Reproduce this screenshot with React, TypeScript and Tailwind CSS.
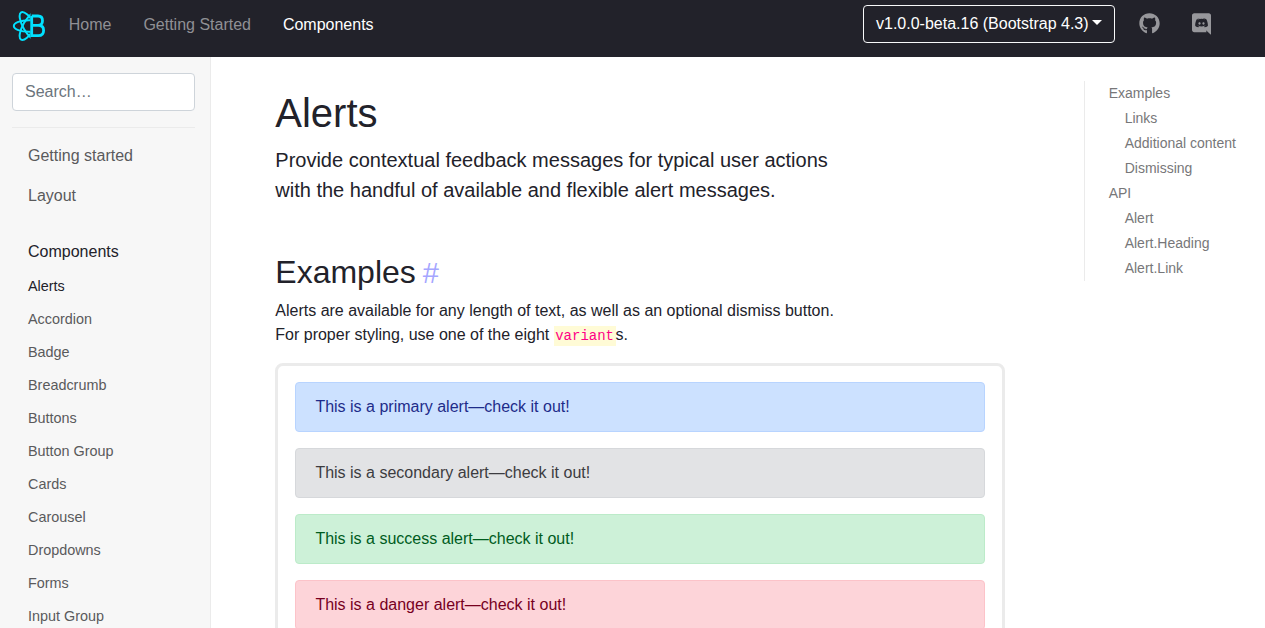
import React from "react";
import { FaGithub } from "react-icons/fa";

const components = ["Alerts", "Accordion", "Badge", "Breadcrumb", "Buttons", "Button Group", "Cards", "Carousel", "Dropdowns", "Forms", "Input Group"];

const alerts = [
  { name: "primary", style: "border-[#b8d4ff] bg-[#cce1ff] text-[#1e2c8a]" },
  { name: "secondary", style: "border-[#d6d8db] bg-[#e2e3e5] text-[#3c3c40]" },
  { name: "success", style: "border-[#bcebc9] bg-[#cdf1d8] text-[#005c1e]" },
  { name: "danger", style: "border-[#fcc3c9] bg-[#fdd4d9] text-[#77001f]" },
];

const toc = [
  { label: "Examples", nested: false },
  { label: "Links", nested: true },
  { label: "Additional content", nested: true },
  { label: "Dismissing", nested: true },
  { label: "API", nested: false },
  { label: "Alert", nested: true },
  { label: "Alert.Heading", nested: true },
  { label: "Alert.Link", nested: true },
];

function Logo() {
  return (
    <svg className="h-[32px] w-[34px] shrink-0" viewBox="0 0 34 32" fill="none" stroke="#00e1ff">
      <clipPath id="orbits">
        <path d="M0 0h18.500v32H0z" />
      </clipPath>
      <g clipPath="url(#orbits)" strokeWidth="2">
        <ellipse cx="17" cy="16" rx="15.200" ry="5.800" />
        <ellipse cx="17" cy="16" rx="15.800" ry="5.800" transform="rotate(60 17 16)" />
        <ellipse cx="17" cy="16" rx="15.800" ry="5.800" transform="rotate(-60 17 16)" />
      </g>
      <path strokeWidth="2.8" d="M19.700 6v19.600h6.700c3.400 0 5.200-2 5.200-5.200s-1.800-5-5.200-5h-6.700M26 15.400c3 0 4.500-1.700 4.500-4.700S29 6 26 6h-6.300" />
    </svg>
  );
}

function DiscordIcon() {
  return (
    <svg className="h-[22px] w-[19px]" viewBox="0 0 448 512" fill="currentColor">
      <path d="M297.216 243.2c0 15.616-11.52 28.416-26.112 28.416-14.336 0-26.112-12.8-26.112-28.416s11.52-28.416 26.112-28.416c14.592 0 26.112 12.8 26.112 28.416zm-119.552-28.416c-14.592 0-26.112 12.8-26.112 28.416s11.776 28.416 26.112 28.416c14.592 0 26.112-12.8 26.112-28.416.256-15.616-11.52-28.416-26.112-28.416zM448 52.736V512c-64.494-56.994-43.868-38.128-118.784-107.776l13.568 47.36H52.48C23.552 451.584 0 428.032 0 398.848V52.736C0 23.552 23.552 0 52.48 0h343.04C424.448 0 448 23.552 448 52.736zm-72.96 242.688c0-82.432-36.864-149.248-36.864-149.248-36.864-27.648-71.936-26.88-71.936-26.88l-3.584 4.096c43.52 13.312 63.744 32.512 63.744 32.512-60.811-33.329-132.244-33.335-191.232-7.424-9.472 4.352-15.104 7.424-15.104 7.424s21.248-20.224 67.328-33.536l-2.56-3.072s-35.072-.768-71.936 26.88c0 0-36.864 66.816-36.864 149.248 0 0 21.504 37.12 78.08 38.912 0 0 9.472-11.52 17.152-21.248-32.512-9.728-44.8-30.208-44.8-30.208 3.766 2.636 9.976 6.053 10.496 6.4 43.21 24.198 104.588 32.126 159.744 8.96 8.96-3.328 18.944-8.192 29.44-15.104 0 0-12.8 20.992-46.336 30.464 7.68 9.728 16.896 20.736 16.896 20.736 56.576-1.792 78.336-38.912 78.336-38.912z" />
    </svg>
  );
}

function Header() {
  return (
    <header className="flex h-[57px] shrink-0 items-start bg-[#22222a] text-white">
      <div className="pt-[10px] pl-3">
        <Logo />
      </div>
      <nav className="flex gap-[31.9px] pt-[13px] pl-[22.8px] text-[#909095]">
        <a>Home</a>
        <a>Getting Started</a>
        <a className="text-white">Components</a>
      </nav>
      <button className="mt-[5px] ml-auto flex h-[38px] w-[252px] items-center rounded border border-[#f8f9fa] px-3 pb-px whitespace-nowrap">
        v1.0.0-beta.16 (Bootstrap 4.3)
        <svg className="mb-0.5 ml-[3px] h-[5px] w-[10px] shrink-0" viewBox="0 0 10 5" fill="currentColor">
          <path d="M0 0h10L5 5z" />
        </svg>
      </button>
      <a className="mt-[13px] ml-6 text-[#97979b]">
        <FaGithub className="size-[21px]" />
      </a>
      <a className="mt-[13px] mr-[54px] ml-8 text-[#97979b]">
        <DiscordIcon />
      </a>
    </header>
  );
}

function Sidebar() {
  return (
    <aside className="w-[211px] shrink-0 border-r border-[#ebebeb] bg-[#f7f7f7] pt-4 text-[#5a5a5c]">
      <div className="mx-3 mr-[15px] border-b border-[#ebebeb] pb-4">
        <input
          placeholder="Search…"
          className="block h-[38px] w-[183px] rounded border border-[#ced4da] bg-white px-3 placeholder:text-[#6c757d]"
        />
      </div>
      <nav className="pl-7">
        <a className="mt-4 block h-6">Getting started</a>
        <a className="mt-4 block h-6">Layout</a>
        <a className="mt-8 mb-2 block h-6 text-[#22222a]">Components</a>
        {components.map((item, i) => (
          <a key={item} className={`block h-[33px] pt-[3px] text-[14.4px] leading-[22px] ${i === 0 ? "text-[#22222a]" : ""}`}>
            {item}
          </a>
        ))}
      </nav>
    </aside>
  );
}

export default function App() {
  return (
    <div className="flex h-[628px] flex-col overflow-hidden bg-white font-['Liberation_Sans',Arial,sans-serif] text-base text-[#22222a]">
      <Header />
      <div className="flex min-h-0 flex-1">
        <Sidebar />
        <main className="ml-[64.3px] w-[730px] shrink-0 pt-8">
          <h1 className="text-[40px] leading-12">Alerts</h1>
          <p className="mt-2 text-xl leading-[30px]">
            Provide contextual feedback messages for typical user actions
            <br />
            with the handful of available and flexible alert messages.
          </p>
          <h2 className="mt-12 text-[32px] leading-[38px]">
            Examples<span className="pl-[7px] text-[29px] leading-none text-[#a5a6ff]">#</span>
          </h2>
          <p className="mt-2">
            Alerts are available for any length of text, as well as an optional dismiss button.
            <br />
            For proper styling, use one of the eight{" "}
            <code className="bg-[#fffbd6] px-[1.5px] py-0.5 font-['Liberation_Mono',monospace] text-sm text-[#ff0086]">variant</code>s.
          </p>
          <div className="mt-4 rounded-lg border-[3px] border-[#ebebeb] px-[17px] py-4">
            {alerts.map(({ name, style }) => (
              <div key={name} className={`mb-4 rounded border py-3 pr-5 pl-[19.1px] ${style}`}>
                This is a {name} alert—check it out!
              </div>
            ))}
          </div>
        </main>
        <aside className="mt-6 ml-[78.7px] h-[200px] border-l border-[#ebebeb] pl-[23.7px] text-sm leading-[25px] whitespace-nowrap text-[#777779]">
          {toc.map(({ label, nested }) => (
            <a key={label} className={nested ? "block pl-4" : "block"}>
              {label}
            </a>
          ))}
        </aside>
      </div>
    </div>
  );
}
